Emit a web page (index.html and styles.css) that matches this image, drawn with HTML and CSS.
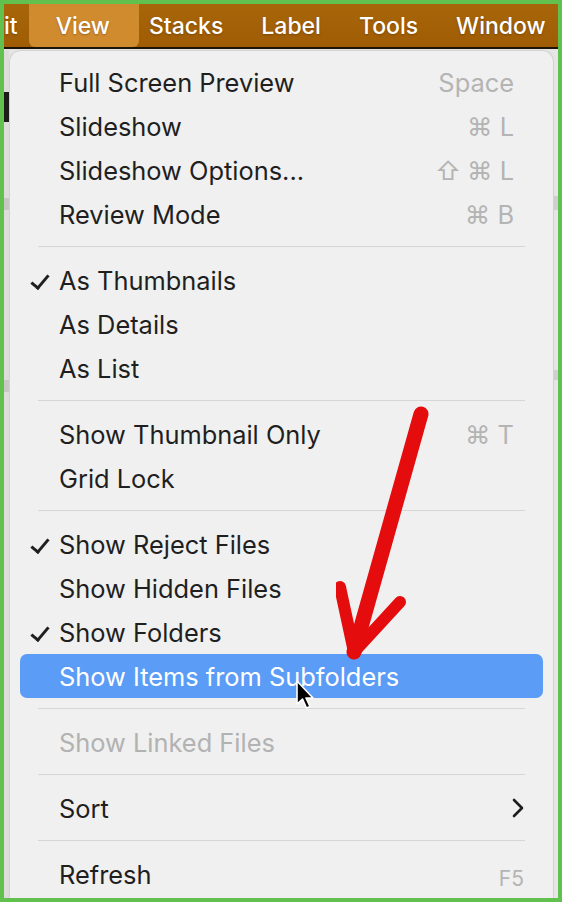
FILE: index.html
```html
<!DOCTYPE html>
<html lang="en">
<head>
    <meta charset="UTF-8">
    <title>View menu</title>
    <link rel="stylesheet" href="styles.css">
</head>
<body>
    <div class="screen">
        <div class="menubar">
            <span class="menubar-item first">it</span>
            <span class="menubar-item active">View</span>
            <span class="menubar-item next">Stacks</span>
            <span class="menubar-item">Label</span>
            <span class="menubar-item">Tools</span>
            <span class="menubar-item">Window</span>
        </div>

        <div class="desk">
            <div class="strip left"></div>

            <div class="menu">
                <div class="item"><span class="label">Full Screen Preview</span><span class="key">Space</span></div>
                <div class="item"><span class="label">Slideshow</span><span class="key">⌘ L</span></div>
                <div class="item"><span class="label">Slideshow Options...</span><span class="key"><span class="shift">⇧</span>⌘ L</span></div>
                <div class="item"><span class="label">Review Mode</span><span class="key">⌘ B</span></div>
                <div class="sep"></div>
                <div class="item checked"><span class="label">As Thumbnails</span></div>
                <div class="item"><span class="label">As Details</span></div>
                <div class="item"><span class="label">As List</span></div>
                <div class="sep"></div>
                <div class="item"><span class="label">Show Thumbnail Only</span><span class="key">⌘ T</span></div>
                <div class="item"><span class="label">Grid Lock</span></div>
                <div class="sep"></div>
                <div class="item checked"><span class="label">Show Reject Files</span></div>
                <div class="item"><span class="label">Show Hidden Files</span></div>
                <div class="item checked"><span class="label">Show Folders</span></div>
                <div class="item selected"><span class="label">Show Items from Subfolders</span></div>
                <div class="sep"></div>
                <div class="item disabled"><span class="label">Show Linked Files</span></div>
                <div class="sep"></div>
                <div class="item"><span class="label">Sort</span>
                    <svg class="chevron" width="12" height="20" viewBox="0 0 12 20"><polyline points="2,2 10,10 2,18" fill="none" stroke="#1e1e1e" stroke-width="2.6" stroke-linecap="round" stroke-linejoin="round"/></svg>
                </div>
                <div class="sep"></div>
                <div class="item"><span class="label">Refresh</span><span class="key small">F5</span></div>

                <svg class="red-arrow" width="120" height="270" viewBox="0 0 120 270">
                    <g fill="none" stroke="#e40c0c" stroke-linecap="round" stroke-linejoin="round">
                        <path d="M85 12 L18 250" stroke-width="15"/>
                        <path d="M4 185 L18 250 L64 200" stroke-width="12"/>
                    </g>
                </svg>

                <svg class="cursor" width="22" height="32" viewBox="0 0 22 32">
                    <path d="M2 1 L2 24 L7.5 19 L11.5 28 L15 26.5 L11 18 L18 18 Z" fill="#000" stroke="#fff" stroke-width="1.6" stroke-linejoin="round"/>
                </svg>
            </div>

            <div class="strip right"></div>
        </div>
    </div>
</body>
</html>
```

FILE: styles.css
```css
body {
    margin: 0;
    padding: 4px;
    background-color: #62c04f;
    font-family: 'Inter', 'Liberation Sans', sans-serif;
}

.screen {
    height: 894px;
    overflow: hidden;
    background-color: #e4e4e4;
    display: flex;
    flex-direction: column;
}

.menubar {
    height: 43px;
    flex-shrink: 0;
    display: flex;
    align-items: stretch;
    background: linear-gradient(#a8660a, #9f5c04);
    border-bottom: 2px solid #1c1408;
    white-space: nowrap;
    overflow: hidden;
}

.menubar-item {
    color: #fff;
    font-size: 23px;
    font-weight: 500;
    display: flex;
    align-items: center;
    padding: 0 19px;
    text-shadow: 0 1px 2px rgba(60, 30, 0, 0.35);
}

.menubar-item.first {
    padding: 0 11px 0 0;
}

.menubar-item.active {
    background-color: #d08b2e;
    border-radius: 0 0 6px 6px;
    padding: 0 29px 0 27px;
}

.menubar-item.next {
    padding-left: 10px;
}

.desk {
    flex: 1;
    display: flex;
    margin-top: 1px;
}

.strip {
    width: 5px;
    flex-shrink: 0;
}

.strip.left {
    background: linear-gradient(#dcdcdc 0, #dcdcdc 42px, #1b1b1b 42px, #1b1b1b 72px, #dcdcdc 72px, #dcdcdc 148px, #c6c6c6 148px, #c6c6c6 160px, #dcdcdc 160px, #dcdcdc 330px, #c8c8c8 330px, #c8c8c8 342px, #dcdcdc 342px);
}

.strip.right {
    width: 4px;
    background: linear-gradient(#e6e6e6 0, #e6e6e6 146px, #cfcfcf 146px, #cfcfcf 160px, #e6e6e6 160px, #e6e6e6 320px, #cfcfcf 320px, #cfcfcf 330px, #e6e6e6 330px);
}

.menu {
    flex: 1;
    position: relative;
    background-color: #f0f0f0;
    border: 1px solid #d2d2d2;
    border-bottom: none;
    border-radius: 12px 12px 0 0;
    padding: 9px 0 0;
}

.item {
    height: 44px;
    margin: 0 10px;
    padding: 0 29px 0 39px;
    display: flex;
    align-items: center;
    justify-content: space-between;
    font-size: 25.4px;
    color: #1f1f1f;
    border-radius: 7px;
    position: relative;
}

.item.checked::before {
    content: "";
    position: absolute;
    left: 15px;
    top: 13px;
    width: 7px;
    height: 15px;
    border: solid #1f1f1f;
    border-width: 0 3px 3px 0;
    transform: rotate(40deg);
}

.item.selected {
    background-color: #5a9cf6;
    color: #fff;
}

.item.disabled {
    color: #b2b2b2;
}

.key {
    color: #b4b4b4;
    display: flex;
    align-items: center;
}

.key .shift {
    margin-right: 6px;
}

.key.small {
    font-size: 21px;
    padding-top: 8px;
    margin-right: -10px;
}

.chevron {
    margin-right: -10px;
}

.sep {
    height: 1px;
    margin: 10px 28px 11px 28px;
    background-color: #d6d6d6;
}

.red-arrow {
    position: absolute;
    left: 326px;
    top: 351px;
}

.cursor {
    position: absolute;
    left: 285px;
    top: 629px;
}
```
